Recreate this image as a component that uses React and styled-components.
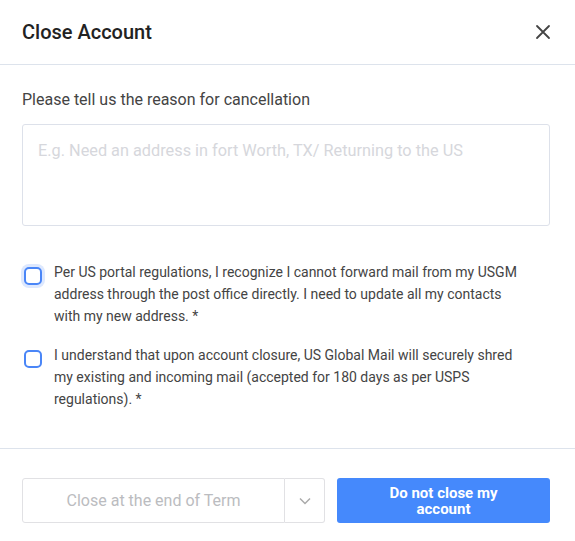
import React, { useState } from "react";
import styled, { createGlobalStyle } from "styled-components";

const Global = createGlobalStyle`
  html, body { margin: 0; padding: 0; background: #fff; }
  body { font-family: Roboto, "Noto Sans", sans-serif; color: #333; }
  * { box-sizing: border-box; }
`;

const Modal = styled.div`
  width: 575px;
  height: 541px;
  background: #fff;
  display: flex;
  flex-direction: column;
`;

const Header = styled.div`
  height: 65px;
  display: flex;
  align-items: center;
  justify-content: space-between;
  padding: 0 22px;
  border-bottom: 1px solid #dde3ec;
`;

const Title = styled.h2`
  margin: 0;
  font-size: 20px;
  font-weight: 500;
  color: #222;
`;

const CloseBtn = styled.button`
  border: 0;
  background: none;
  padding: 0;
  width: 20px;
  height: 20px;
  display: flex;
  align-items: center;
  justify-content: center;
  cursor: pointer;
`;

const Body = styled.div`
  padding: 24px 25px 24px 22px;
  border-bottom: 1px solid #dde3ec;
  height: 384px;
`;

const Label = styled.div`
  font-size: 16px;
  color: #444;
  line-height: 22px;
  margin-bottom: 13px;
`;

const Reason = styled.textarea`
  display: block;
  width: 528px;
  height: 102px;
  border: 1px solid #dde1ea;
  border-radius: 3px;
  padding: 16px 15px;
  font-family: inherit;
  font-size: 16.3px;
  resize: none;
  outline: none;
  &::placeholder { color: #d6d7dc; }
`;

const Checks = styled.div`
  margin-top: 35px;
  display: flex;
  flex-direction: column;
  gap: 17px;
`;

const CheckRow = styled.label`
  display: flex;
  align-items: flex-start;
  gap: 12px;
  padding-left: 2px;
  font-size: 14px;
  line-height: 22px;
  color: #444;
`;

const CheckText = styled.span`
  max-width: 472px;
`;

const Box = styled.span`
  flex: none;
  width: 18px;
  height: 18px;
  margin-top: 6px;
  border: 2px solid #4a86f7;
  border-radius: 5px;
  background: #fff;
  box-shadow: ${(p) => (p.$focus ? "0 0 0 3px #dde8fe" : "none")};
`;

const Footer = styled.div`
  flex: 1;
  display: flex;
  align-items: flex-start;
  padding: 29px 25px 0 22px;
  gap: 12px;
`;

const SelectGroup = styled.div`
  display: flex;
  width: 303px;
  height: 45px;
`;

const SelectMain = styled.div`
  flex: 1;
  border: 1px solid #e1e1e4;
  border-radius: 3px 0 0 3px;
  display: flex;
  align-items: center;
  justify-content: center;
  font-size: 16px;
  color: #bbbcc0;
`;

const SelectArrow = styled.div`
  width: 40px;
  border: 1px solid #e1e1e4;
  border-left: 0;
  border-radius: 0 3px 3px 0;
  display: flex;
  align-items: center;
  justify-content: center;
`;

const Primary = styled.button`
  width: 213px;
  height: 45px;
  border: 0;
  border-radius: 3px;
  background: #4589fc;
  color: #fff;
  font-family: inherit;
  font-size: 15px;
  font-weight: 700;
  line-height: 16px;
  padding: 0 40px;
  cursor: pointer;
`;

export default function App() {
  const [checks] = useState([
    {
      text: "Per US portal regulations, I recognize I cannot forward mail from my USGM address through the post office directly. I need to update all my contacts with my new address. *",
      focus: true,
    },
    {
      text: "I understand that upon account closure, US Global Mail will securely shred my existing and incoming mail (accepted for 180 days as per USPS regulations). *",
      focus: false,
    },
  ]);

  return (
    <>
      <Global />
      <Modal>
        <Header>
          <Title>Close Account</Title>
          <CloseBtn aria-label="Close">
            <svg width="16" height="16" viewBox="0 0 16 16">
              <path d="M2 2L14 14M14 2L2 14" stroke="#444" strokeWidth="1.8" strokeLinecap="round" />
            </svg>
          </CloseBtn>
        </Header>
        <Body>
          <Label>Please tell us the reason for cancellation</Label>
          <Reason placeholder="E.g. Need an address in fort Worth, TX/ Returning to the US" />
          <Checks>
            {checks.map((c, i) => (
              <CheckRow key={i}>
                <Box $focus={c.focus} />
                <CheckText>{c.text}</CheckText>
              </CheckRow>
            ))}
          </Checks>
        </Body>
        <Footer>
          <SelectGroup>
            <SelectMain>Close at the end of Term</SelectMain>
            <SelectArrow>
              <svg width="12" height="8" viewBox="0 0 12 8">
                <path d="M1 1.5L6 6.5L11 1.5" stroke="#aaa" strokeWidth="1.5" fill="none" />
              </svg>
            </SelectArrow>
          </SelectGroup>
          <Primary>Do not close my account</Primary>
        </Footer>
      </Modal>
    </>
  );
}
